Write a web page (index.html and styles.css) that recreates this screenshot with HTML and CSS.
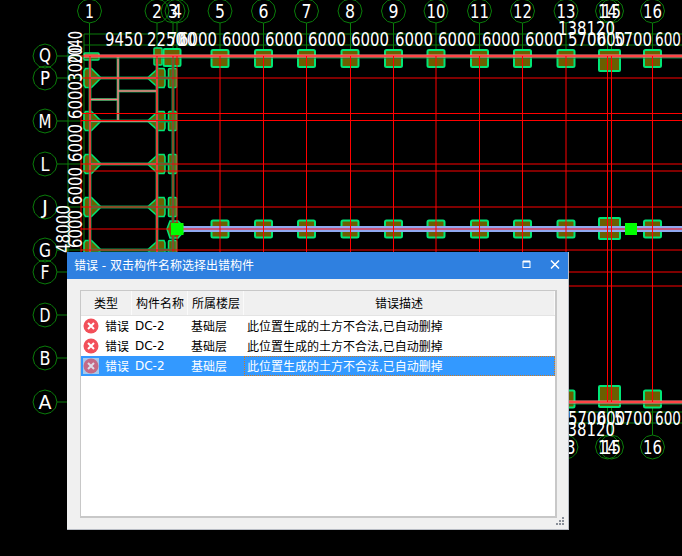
FILE: index.html
```html
<!DOCTYPE html>
<html lang="zh">
<head>
<meta charset="utf-8">
<title>错误</title>
<link rel="stylesheet" href="styles.css">
</head>
<body>
<main class="desktop">
<svg class="cad" width="682" height="556" viewBox="0 0 682 556" xmlns="http://www.w3.org/2000/svg">
  <defs>
    <polygon id="bub" class="bubble" points="12,0 10.4,6 6,10.4 0,12 -6,10.4 -10.4,6 -12,0 -10.4,-6 -6,-10.4 0,-12 6,-10.4 10.4,-6"/>
    <rect id="box" class="col" x="-8.5" y="-8.5" width="17" height="17" rx="1.5"/>
    <rect id="bigbox" class="col" x="-10.5" y="-10.5" width="21" height="21" rx="1"/>
    <path id="arL" class="col thin" d="M-5-9.500H1L10.500 0 1 9.500H-5L-6.500 7V-7Z"/>
    <path id="arR" class="col thin" d="M7-9.500H1L-9.500 0 1 9.500H7L8 7V-7Z"/>
    <rect id="narrow" class="col thin" x="-4" y="-9.500" width="8" height="19" rx="1"/>
  </defs>

  <!-- dim green axes -->
  <g class="dim">
    <path d="M89.500 23V56M157 23V56M173 23V56M177 23V56M220 23V56M263.500 23V56M306.500 23V56M350.500 23V56M393.500 23V56M436 23V56M479.500 23V56M522.500 23V56M566 23V56M607.500 23V56M611.500 23V56M652.500 23V56"/>
    <path d="M607.500 402V435M611.500 402V435M652.500 402V435"/>
    <path d="M84 34H682M84 45H682M569 412H682M569 423H682"/>
    <path d="M57 56H90M57 78H90M57 121H90M57 164H90M57 207H90M57 250H90M57 272H67M57 315H67M57 358H67M57 402H67"/>
    <path d="M84 34V252M68 46V252"/>
  </g>

  <!-- columns -->
  <use href="#box" x="220" y="58.500"/><use href="#box" x="263.500" y="58.500"/><use href="#box" x="306.500" y="58.500"/><use href="#box" x="350" y="58.500"/><use href="#box" x="393.500" y="58.500"/><use href="#box" x="436" y="58.500"/><use href="#box" x="479.500" y="58.500"/><use href="#box" x="522.500" y="58.500"/><use href="#box" x="566" y="58.500"/><use href="#bigbox" x="609.500" y="60.500"/><use href="#box" x="652.500" y="58.500"/>
  <use href="#box" x="172" y="57.500"/><rect class="col thin" x="154" y="48" width="8" height="17" rx="1"/><rect class="col thin" x="84" y="53" width="15" height="7" rx="1"/>
  <use href="#box" x="220" y="229"/><use href="#box" x="263.500" y="229"/><use href="#box" x="306.500" y="229"/><use href="#box" x="350" y="229"/><use href="#box" x="393.500" y="229"/><use href="#box" x="436" y="229"/><use href="#box" x="479.500" y="229"/><use href="#box" x="522.500" y="229"/><use href="#box" x="566" y="229"/><use href="#bigbox" x="609.500" y="228.500"/><use href="#box" x="652.500" y="229"/>
  <use href="#box" x="566" y="399"/><use href="#bigbox" x="609.500" y="396.500"/><use href="#box" x="652.500" y="399"/>
  <use href="#arL" x="90.500" y="78"/><use href="#arL" x="90.500" y="121"/><use href="#arL" x="90.500" y="164"/><use href="#arL" x="90.500" y="207"/><use href="#arL" x="90.500" y="250"/>
  <use href="#arR" x="157" y="78"/><use href="#arR" x="157" y="121"/><use href="#arR" x="157" y="164"/><use href="#arR" x="157" y="207"/><use href="#arR" x="157" y="250"/>
  <use href="#narrow" x="172.500" y="78"/><use href="#narrow" x="172.500" y="121"/><use href="#narrow" x="172.500" y="164"/><use href="#narrow" x="172.500" y="207"/><use href="#narrow" x="172.500" y="250"/>
  <path class="col thin" d="M170 221H178L186 229 178 238H170L167 229Z"/>

  <!-- beams -->
  <g class="beam-o">
    <path d="M90 56V252M157 56V252M173 56V252M118 56V120M90 78H172M90 121H172M118 91H157M90 99.500H118M90 164H172M90 207H172M90 250H172"/>
  </g>
  <g class="beam-i">
    <path d="M90 56V252M157 56V252M118 56V120M90 78H157M90 121H157M118 91H157M90 99.500H118M90 164H157"/>
  </g>
  <path class="band-g" d="M84 58H682M569 404H682"/>
  <path class="band-p" d="M84 56H682M569 402H682"/>
  <path class="band-b" d="M180 229H682"/>

  <!-- red axes -->
  <g class="axis">
    <path d="M81 56H682M81 78H682M81 113.500H682M81 120.500H682M81 164H682M81 171H682M81 207H682M81 229H682M81 250H682M569 272H682M569 286H682M569 402H682"/>
    <path d="M81 56V252M90 56V252M157 56V252M173 56V252M177 56V252M220 56V252M263.500 56V252M306.500 56V252M350.500 56V252M393.500 56V252M436 56V252M479.500 56V252M522.500 56V252M566 56V400M607.500 56V402M611.500 56V402M652.500 56V402"/>
  </g>

  <rect class="node" x="171" y="223" width="12.500" height="12"/>
  <rect class="node" x="625" y="223" width="12" height="12"/>

  <!-- bubbles -->
  <g>
    <use href="#bub" x="89.500" y="11"/><use href="#bub" x="157" y="11"/><use href="#bub" x="173" y="11"/><use href="#bub" x="177" y="11"/><use href="#bub" x="220" y="11"/><use href="#bub" x="263.500" y="11"/><use href="#bub" x="306.500" y="11"/><use href="#bub" x="350" y="11"/><use href="#bub" x="393.500" y="11"/><use href="#bub" x="436" y="11"/><use href="#bub" x="479.500" y="11"/><use href="#bub" x="522.500" y="11"/><use href="#bub" x="566" y="11"/><use href="#bub" x="607.500" y="11"/><use href="#bub" x="611.500" y="11"/><use href="#bub" x="652.500" y="11"/>
    <use href="#bub" x="566" y="447"/><use href="#bub" x="607.500" y="447"/><use href="#bub" x="611.500" y="447"/><use href="#bub" x="652.500" y="447"/>
    <use href="#bub" x="45" y="56"/><use href="#bub" x="45" y="78"/><use href="#bub" x="45" y="121"/><use href="#bub" x="45" y="164"/><use href="#bub" x="45" y="207"/><use href="#bub" x="45" y="250"/><use href="#bub" x="45" y="272"/><use href="#bub" x="45" y="315"/><use href="#bub" x="45" y="358"/><use href="#bub" x="45" y="402"/>
  </g>

  <!-- bubble labels -->
  <g class="lbl">
    <text x="89.500" y="18" textLength="9" lengthAdjust="spacingAndGlyphs">1</text>
    <text x="157" y="18" textLength="10" lengthAdjust="spacingAndGlyphs">2</text>
    <text x="173" y="18" textLength="10" lengthAdjust="spacingAndGlyphs">3</text>
    <text x="177" y="18" textLength="10" lengthAdjust="spacingAndGlyphs">4</text>
    <text x="220" y="18" textLength="10" lengthAdjust="spacingAndGlyphs">5</text>
    <text x="263.500" y="18" textLength="10" lengthAdjust="spacingAndGlyphs">6</text>
    <text x="306.500" y="18" textLength="10" lengthAdjust="spacingAndGlyphs">7</text>
    <text x="350" y="18" textLength="10" lengthAdjust="spacingAndGlyphs">8</text>
    <text x="393.500" y="18" textLength="10" lengthAdjust="spacingAndGlyphs">9</text>
    <text x="436" y="18" textLength="19" lengthAdjust="spacingAndGlyphs">10</text>
    <text x="479.500" y="18" textLength="19" lengthAdjust="spacingAndGlyphs">11</text>
    <text x="522.500" y="18" textLength="19" lengthAdjust="spacingAndGlyphs">12</text>
    <text x="566" y="18" textLength="19" lengthAdjust="spacingAndGlyphs">13</text>
    <text x="607.500" y="18" textLength="19" lengthAdjust="spacingAndGlyphs">14</text>
    <text x="611.500" y="18" textLength="19" lengthAdjust="spacingAndGlyphs">15</text>
    <text x="652.500" y="18" textLength="19" lengthAdjust="spacingAndGlyphs">16</text>
    <text x="566" y="454" textLength="19" lengthAdjust="spacingAndGlyphs">13</text>
    <text x="607.500" y="454" textLength="19" lengthAdjust="spacingAndGlyphs">14</text>
    <text x="611.500" y="454" textLength="19" lengthAdjust="spacingAndGlyphs">15</text>
    <text x="652.500" y="454" textLength="19" lengthAdjust="spacingAndGlyphs">16</text>
    <text x="45" y="62" textLength="12" lengthAdjust="spacingAndGlyphs">Q</text>
    <text x="45" y="85" textLength="10" lengthAdjust="spacingAndGlyphs">P</text>
    <text x="45" y="128" textLength="13" lengthAdjust="spacingAndGlyphs">M</text>
    <text x="45" y="171" textLength="9" lengthAdjust="spacingAndGlyphs">L</text>
    <text x="45" y="214" textLength="6" lengthAdjust="spacingAndGlyphs">J</text>
    <text x="45" y="257" textLength="12" lengthAdjust="spacingAndGlyphs">G</text>
    <text x="45" y="279" textLength="9" lengthAdjust="spacingAndGlyphs">F</text>
    <text x="45" y="322" textLength="11" lengthAdjust="spacingAndGlyphs">D</text>
    <text x="45" y="365" textLength="11" lengthAdjust="spacingAndGlyphs">B</text>
    <text x="45" y="409" textLength="13" lengthAdjust="spacingAndGlyphs">A</text>
  </g>

  <!-- dimensions -->
  <g class="dimtxt">
    <text x="105" y="46" textLength="38" lengthAdjust="spacingAndGlyphs">9450</text>
    <text x="147" y="46" textLength="38" lengthAdjust="spacingAndGlyphs">2250</text>
    <text x="168" y="46" textLength="28" lengthAdjust="spacingAndGlyphs">700</text>
    <text x="179" y="46" textLength="38" lengthAdjust="spacingAndGlyphs">6000</text>
    <text x="222" y="46" textLength="38" lengthAdjust="spacingAndGlyphs">6000</text>
    <text x="265" y="46" textLength="38" lengthAdjust="spacingAndGlyphs">6000</text>
    <text x="308" y="46" textLength="38" lengthAdjust="spacingAndGlyphs">6000</text>
    <text x="351" y="46" textLength="38" lengthAdjust="spacingAndGlyphs">6000</text>
    <text x="395" y="46" textLength="38" lengthAdjust="spacingAndGlyphs">6000</text>
    <text x="438" y="46" textLength="38" lengthAdjust="spacingAndGlyphs">6000</text>
    <text x="482" y="46" textLength="38" lengthAdjust="spacingAndGlyphs">6000</text>
    <text x="525" y="46" textLength="38" lengthAdjust="spacingAndGlyphs">6000</text>
    <text x="568" y="46" textLength="38" lengthAdjust="spacingAndGlyphs">5700</text>
    <text x="597" y="46" textLength="28" lengthAdjust="spacingAndGlyphs">600</text>
    <text x="614" y="46" textLength="38" lengthAdjust="spacingAndGlyphs">5700</text>
    <text x="655" y="46" textLength="26" lengthAdjust="spacingAndGlyphs">600</text>
    <text x="558" y="35" textLength="57" lengthAdjust="spacingAndGlyphs">138120</text>
    <text x="568" y="425" textLength="38" lengthAdjust="spacingAndGlyphs">5700</text>
    <text x="597" y="425" textLength="28" lengthAdjust="spacingAndGlyphs">600</text>
    <text x="614" y="425" textLength="38" lengthAdjust="spacingAndGlyphs">5700</text>
    <text x="655" y="425" textLength="26" lengthAdjust="spacingAndGlyphs">600</text>
    <text x="558" y="436" textLength="57" lengthAdjust="spacingAndGlyphs">138120</text>
    <text transform="translate(82 248) rotate(-90)" textLength="38" lengthAdjust="spacingAndGlyphs">6000</text>
    <text transform="translate(82 205) rotate(-90)" textLength="38" lengthAdjust="spacingAndGlyphs">6000</text>
    <text transform="translate(82 162) rotate(-90)" textLength="38" lengthAdjust="spacingAndGlyphs">6000</text>
    <text transform="translate(82 119) rotate(-90)" textLength="38" lengthAdjust="spacingAndGlyphs">6000</text>
    <text transform="translate(82 82) rotate(-90)" textLength="38" lengthAdjust="spacingAndGlyphs">3000</text>
    <text transform="translate(82 64) rotate(-90)" textLength="33" lengthAdjust="spacingAndGlyphs">2040</text>
    <text transform="translate(70 253) rotate(-90)" textLength="48" lengthAdjust="spacingAndGlyphs">48000</text>
  </g>
</svg>

<section class="dialog">
  <header class="titlebar">
    <span class="title">错误 - 双击构件名称选择出错构件</span>
    <svg class="winbtn" width="10" height="9" viewBox="0 0 10 9"><rect class="ico-max" x="1" y="1.500" width="7" height="6"/><path class="ico-maxtop" d="M1 1.500H8"/></svg>
    <svg class="winbtn close" width="10" height="9" viewBox="0 0 10 9"><path class="ico-close" d="M1 .5L9 8.500M9 .5L1 8.500"/></svg>
  </header>
  <div class="content">
    <div class="table">
      <div class="row head">
        <div class="cell center">类型</div>
        <div class="cell">构件名称</div>
        <div class="cell">所属楼层</div>
        <div class="cell center">错误描述</div>
      </div>
      <div class="row">
        <div class="cell type"><svg class="err" width="16" height="16" viewBox="0 0 16 16"><circle class="err-bg" cx="8" cy="8" r="7.500"/><path class="err-x" d="M5 5L11 11M11 5L5 11"/></svg>错误</div>
        <div class="cell">DC-2</div>
        <div class="cell">基础层</div>
        <div class="cell desc">此位置生成的土方不合法,已自动删掉</div>
      </div>
      <div class="row">
        <div class="cell type"><svg class="err" width="16" height="16" viewBox="0 0 16 16"><circle class="err-bg" cx="8" cy="8" r="7.500"/><path class="err-x" d="M5 5L11 11M11 5L5 11"/></svg>错误</div>
        <div class="cell">DC-2</div>
        <div class="cell">基础层</div>
        <div class="cell desc">此位置生成的土方不合法,已自动删掉</div>
      </div>
      <div class="row selected">
        <div class="cell type"><svg class="err sel" width="16" height="16" viewBox="0 0 16 16"><rect class="err-sq" width="16" height="16"/><circle class="err-bg" cx="8" cy="8" r="7.500"/><path class="err-x" d="M5 5L11 11M11 5L5 11"/></svg>错误</div>
        <div class="cell">DC-2</div>
        <div class="cell">基础层</div>
        <div class="cell desc focus">此位置生成的土方不合法,已自动删掉</div>
      </div>
    </div>
    <svg class="grip" width="9" height="9" viewBox="0 0 9 9"><path class="grip-dots" d="M6 0h2v2H6zM3 3h2v2H3zM6 3h2v2H6zM0 6h2v2H0zM3 6h2v2H3zM6 6h2v2H6z"/></svg>
  </div>
</section>
</main>
</body>
</html>
```

FILE: styles.css
```css
html, body {
  margin: 0;
  padding: 0;
  background: #000;
}

.desktop {
  position: relative;
  width: 682px;
  height: 556px;
  overflow: hidden;
  background: #000;
}

.cad {
  display: block;
}

.dim path {
  fill: none;
  stroke: #0a7d0a;
  stroke-width: 1;
}

.bubble {
  fill: none;
  stroke: #0a7d0a;
  stroke-width: 1;
}

.col {
  fill: #6b5f00;
  stroke: #00e676;
  stroke-width: 2;
}

.col.thin {
  stroke-width: 1.5;
}

.beam-o path {
  fill: none;
  stroke: #0c9a50;
  stroke-width: 3;
}

.beam-i path {
  fill: none;
  stroke: #f58080;
  stroke-width: 1.5;
}

.band-g {
  fill: none;
  stroke: #0c8a40;
  stroke-width: 1;
}

.band-p {
  fill: none;
  stroke: #ff8a8a;
  stroke-width: 3;
}

.band-b {
  fill: none;
  stroke: #8fa8f0;
  stroke-width: 6;
}

.axis path {
  fill: none;
  stroke: #ff0000;
  stroke-width: 1;
}

.node {
  fill: #00ff00;
}

.lbl text {
  fill: #fff;
  font-family: "DejaVu Sans", sans-serif;
  font-size: 19px;
  text-anchor: middle;
}

.dimtxt text {
  fill: #fff;
  font-family: "DejaVu Sans", sans-serif;
  font-size: 19px;
}

.dialog {
  position: absolute;
  left: 67px;
  top: 252px;
  width: 502px;
  height: 278px;
  box-sizing: border-box;
  background: #f0f0f0;
  border-right: 1px solid #b8bcc4;
  border-bottom: 1px solid #b8bcc4;
  display: flex;
  flex-direction: column;
  font-family: "DejaVu Sans", "Noto Sans CJK SC", sans-serif;
  font-size: 12px;
  color: #000;
}

.titlebar {
  height: 27px;
  flex: none;
  background: #2f80e0;
  color: #fff;
  display: flex;
  align-items: center;
  padding: 0 8px 2px 7px;
  box-sizing: border-box;
}

.title {
  flex: 1;
}

.winbtn {
  flex: none;
}

.winbtn.close {
  margin-left: 18px;
}

.ico-max {
  fill: none;
  stroke: #fff;
  stroke-width: 1;
}

.ico-maxtop {
  fill: none;
  stroke: #fff;
  stroke-width: 2;
}

.ico-close {
  fill: none;
  stroke: #fff;
  stroke-width: 1.5;
}

.content {
  position: relative;
  flex: 1;
  padding: 11px 11px 11px 13px;
  min-height: 0;
  display: flex;
}

.table {
  flex: 1;
  box-sizing: border-box;
  border: 1px solid #c8c8c8;
  border-right-width: 2px;
  border-bottom-width: 2px;
  background: #fff;
  overflow: hidden;
}

.row {
  display: grid;
  grid-template-columns: 51px 56px 56px 1fr;
  height: 20px;
  align-items: stretch;
}

.row.head {
  height: 25px;
  box-sizing: border-box;
  background: #f0f0f0;
  border-bottom: 1px solid #e4e4e4;
}

.row.head .cell {
  border-right: 1px solid #fafafa;
  padding-left: 4px;
}

.row.head .cell.center {
  justify-content: center;
  padding-left: 0;
}

.cell {
  display: flex;
  align-items: center;
  padding-left: 3px;
  padding-bottom: 1px;
  white-space: nowrap;
  box-sizing: border-box;
}

.cell.type {
  padding-left: 2px;
  gap: 6px;
}

.cell.desc {
  padding-left: 3px;
}

.err {
  display: block;
  flex: none;
}

.err-bg {
  fill: #f2505a;
}

.err-x {
  fill: none;
  stroke: #fff;
  stroke-width: 2;
}

.err-sq {
  fill: #a6c8ea;
}

.err.sel .err-bg {
  fill: #c46a86;
}

.err.sel .err-x {
  stroke: #dcdce8;
}

.row.selected {
  background: #3399ff;
  color: #fff;
}

.cell.focus {
  outline: 1px dotted #d07a20;
  outline-offset: -1px;
}

.grip {
  position: absolute;
  right: 3px;
  bottom: 3px;
}

.grip-dots {
  fill: #8a8f98;
}
```
